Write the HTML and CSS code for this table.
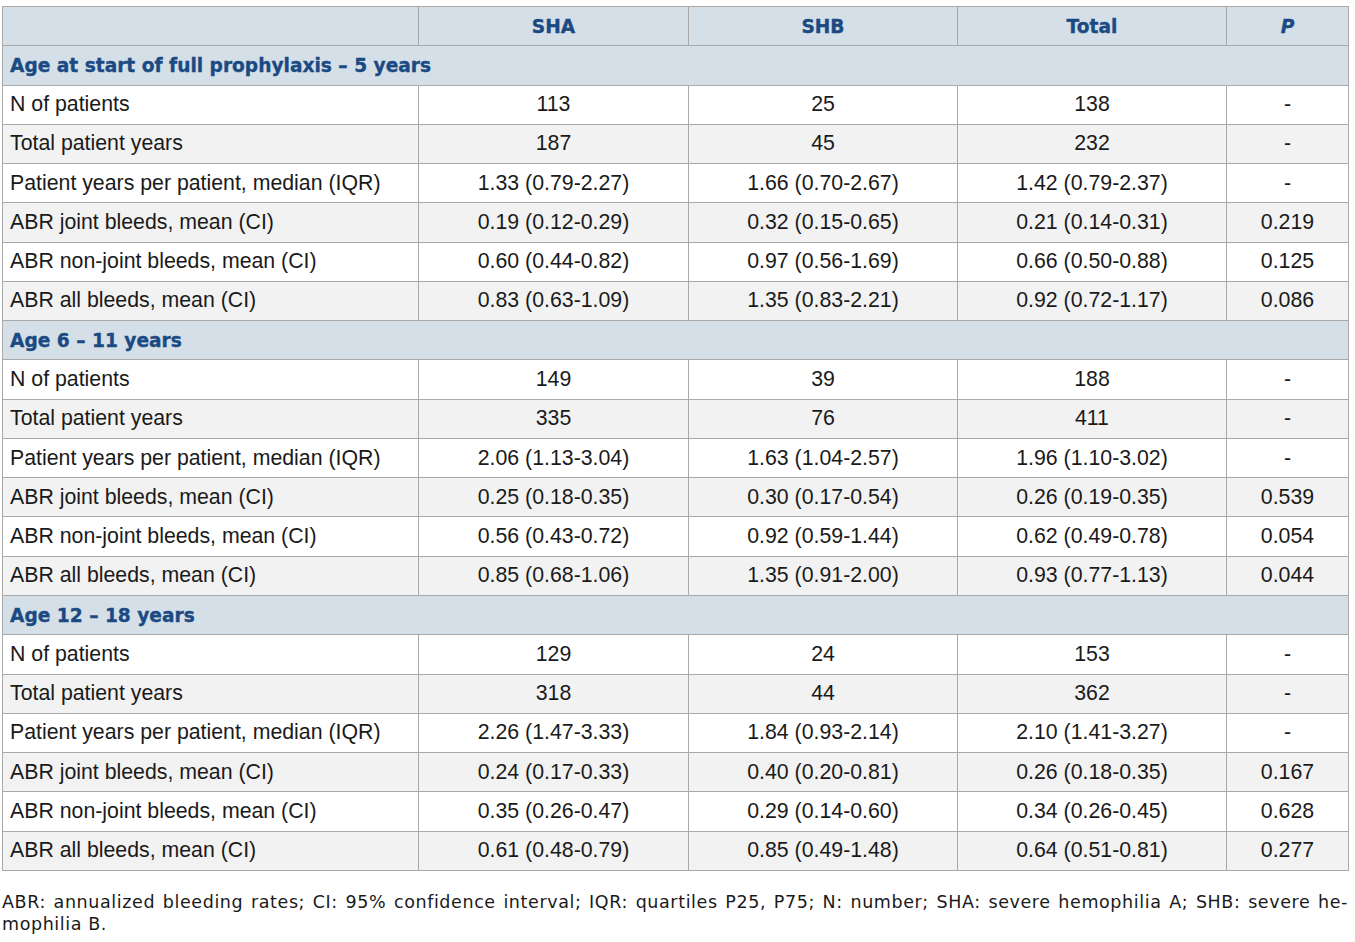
FILE: index.html
```html
<!DOCTYPE html>
<html>
<head>
<meta charset="utf-8">
<link rel="stylesheet" href="styles.css">
</head>
<body>
<div class="wrap">
<table class="data">
<colgroup>
<col class="c1"><col class="c2"><col class="c3"><col class="c4"><col class="c5">
</colgroup>
<thead>
<tr class="head"><th></th><th>SHA</th><th>SHB</th><th>Total</th><th><i>P</i></th></tr>
</thead>
<tbody>
<tr class="sec"><td colspan="5">Age at start of full prophylaxis – 5 years</td></tr>
<tr><td>N of patients</td><td>113</td><td>25</td><td>138</td><td>-</td></tr>
<tr class="alt"><td>Total patient years</td><td>187</td><td>45</td><td>232</td><td>-</td></tr>
<tr><td>Patient years per patient, median (IQR)</td><td>1.33 (0.79-2.27)</td><td>1.66 (0.70-2.67)</td><td>1.42 (0.79-2.37)</td><td>-</td></tr>
<tr class="alt"><td>ABR joint bleeds, mean (CI)</td><td>0.19 (0.12-0.29)</td><td>0.32 (0.15-0.65)</td><td>0.21 (0.14-0.31)</td><td>0.219</td></tr>
<tr><td>ABR non-joint bleeds, mean (CI)</td><td>0.60 (0.44-0.82)</td><td>0.97 (0.56-1.69)</td><td>0.66 (0.50-0.88)</td><td>0.125</td></tr>
<tr class="alt"><td>ABR all bleeds, mean (CI)</td><td>0.83 (0.63-1.09)</td><td>1.35 (0.83-2.21)</td><td>0.92 (0.72-1.17)</td><td>0.086</td></tr>
<tr class="sec"><td colspan="5">Age 6 – 11 years</td></tr>
<tr><td>N of patients</td><td>149</td><td>39</td><td>188</td><td>-</td></tr>
<tr class="alt"><td>Total patient years</td><td>335</td><td>76</td><td>411</td><td>-</td></tr>
<tr><td>Patient years per patient, median (IQR)</td><td>2.06 (1.13-3.04)</td><td>1.63 (1.04-2.57)</td><td>1.96 (1.10-3.02)</td><td>-</td></tr>
<tr class="alt"><td>ABR joint bleeds, mean (CI)</td><td>0.25 (0.18-0.35)</td><td>0.30 (0.17-0.54)</td><td>0.26 (0.19-0.35)</td><td>0.539</td></tr>
<tr><td>ABR non-joint bleeds, mean (CI)</td><td>0.56 (0.43-0.72)</td><td>0.92 (0.59-1.44)</td><td>0.62 (0.49-0.78)</td><td>0.054</td></tr>
<tr class="alt"><td>ABR all bleeds, mean (CI)</td><td>0.85 (0.68-1.06)</td><td>1.35 (0.91-2.00)</td><td>0.93 (0.77-1.13)</td><td>0.044</td></tr>
<tr class="sec"><td colspan="5">Age 12 – 18 years</td></tr>
<tr><td>N of patients</td><td>129</td><td>24</td><td>153</td><td>-</td></tr>
<tr class="alt"><td>Total patient years</td><td>318</td><td>44</td><td>362</td><td>-</td></tr>
<tr><td>Patient years per patient, median (IQR)</td><td>2.26 (1.47-3.33)</td><td>1.84 (0.93-2.14)</td><td>2.10 (1.41-3.27)</td><td>-</td></tr>
<tr class="alt"><td>ABR joint bleeds, mean (CI)</td><td>0.24 (0.17-0.33)</td><td>0.40 (0.20-0.81)</td><td>0.26 (0.18-0.35)</td><td>0.167</td></tr>
<tr><td>ABR non-joint bleeds, mean (CI)</td><td>0.35 (0.26-0.47)</td><td>0.29 (0.14-0.60)</td><td>0.34 (0.26-0.45)</td><td>0.628</td></tr>
<tr class="alt"><td>ABR all bleeds, mean (CI)</td><td>0.61 (0.48-0.79)</td><td>0.85 (0.49-1.48)</td><td>0.64 (0.51-0.81)</td><td>0.277</td></tr>
</tbody>
</table>
<div class="note">
<p class="line1">ABR: annualized bleeding rates; CI: 95% confidence interval; IQR: quartiles P25, P75; N: number; SHA: severe hemophilia A; SHB: severe he-</p>
<p class="line2">mophilia B.</p>
</div>
</div>
</body>
</html>
```
FILE: styles.css
```css
html, body {
  margin: 0;
  padding: 0;
  background: #ffffff;
}
.wrap {
  padding: 6px 7px 0 2px;
}
.data {
  width: 1346px;
  border-collapse: collapse;
  table-layout: fixed;
  font-family: "Liberation Sans", Arial, sans-serif;
  font-size: 21.3px;
  color: #1a1a1a;
}
.c1 { width: 416px; }
.c2 { width: 270px; }
.c3 { width: 269px; }
.c4 { width: 269px; }
.c5 { width: 122px; }
.data th, .data td {
  border: 1px solid #a9a9a9;
  height: 39.27px;
  padding: 0 7px;
  box-sizing: border-box;
  text-align: center;
  vertical-align: middle;
  white-space: nowrap;
}
.data td:first-child {
  padding-left: 7px;
  text-align: left;
}
.head th,
.sec td {
  background: #d4dfe8;
  color: #1b4a83;
  font-family: "DejaVu Sans", "Open Sans", sans-serif;
  font-weight: 700;
  font-size: 18.6px;
  -webkit-text-stroke: 0.35px #1b4a83;
}
.head th i {
  font-style: italic;
}
.alt td {
  background: #f2f2f2;
}
.note {
  font-family: "DejaVu Sans", "Open Sans", sans-serif;
  font-size: 17.5px;
  letter-spacing: 0.6px;
  color: #1a1a1a;
  width: 1346px;
  padding-top: 20px;
}
.note p {
  margin: 0;
  line-height: 22px;
}
.line1 {
  text-align: justify;
  text-align-last: justify;
}
```
